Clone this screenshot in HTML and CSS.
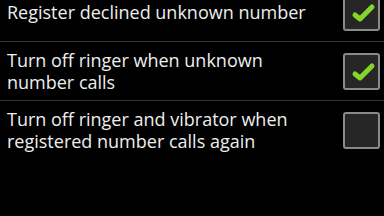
FILE: index.html
```html
<!DOCTYPE html>
<html lang="en">

<head>
 <meta charset="UTF-8">
 <meta name="viewport" content="width=device-width, initial-scale=1.0">
 <title>Call settings</title>
 <link rel="stylesheet" href="styles.css">
</head>

<body>
 <div class="list">
  <!-- Declined numbers -->
  <div class="row">
   <div class="label">Register declined unknown number</div>
   <div class="check on">
    <svg viewBox="0 0 37 37" width="37" height="37"><path d="M12 21 L17 25 L29 13" /></svg>
   </div>
  </div>
  <div class="divider"></div>
  <div class="row">
   <div class="label">Turn off ringer when unknown<br>number calls</div>
   <div class="check on">
    <svg viewBox="0 0 37 37" width="37" height="37"><path d="M12 21 L17 25 L29 13" /></svg>
   </div>
  </div>
  <div class="divider"></div>
  <div class="row">
   <div class="label">Turn off ringer and vibrator when<br>registered number calls again</div>
   <div class="check"></div>
  </div>
 </div>
</body>

</html>
```

FILE: styles.css
```css
body {
 margin: 0;
 background-color: #000;
 width: 384px;
 height: 216px;
 overflow: hidden;
}

.list {
 margin-top: -17px;
}

.row {
 display: flex;
 justify-content: space-between;
 align-items: center;
 height: 58px;
 padding: 0 4px 0 7px;
}

.label {
 font-family: "Open Sans", "DejaVu Sans", sans-serif;
 font-size: 18px;
 line-height: 22px;
 color: #eee;
}

.divider {
 height: 1px;
 background: #333;
}

.check {
 box-sizing: border-box;
 width: 37px;
 height: 37px;
 border: 2px solid #8a8a8a;
 border-radius: 3px;
 background: #262626;
 flex-shrink: 0;
}

.check svg {
 display: block;
 margin: -2px;
}

.check path {
 fill: none;
 stroke: #84d42a;
 stroke-width: 5;
 stroke-linecap: round;
 stroke-linejoin: round;
}
```
